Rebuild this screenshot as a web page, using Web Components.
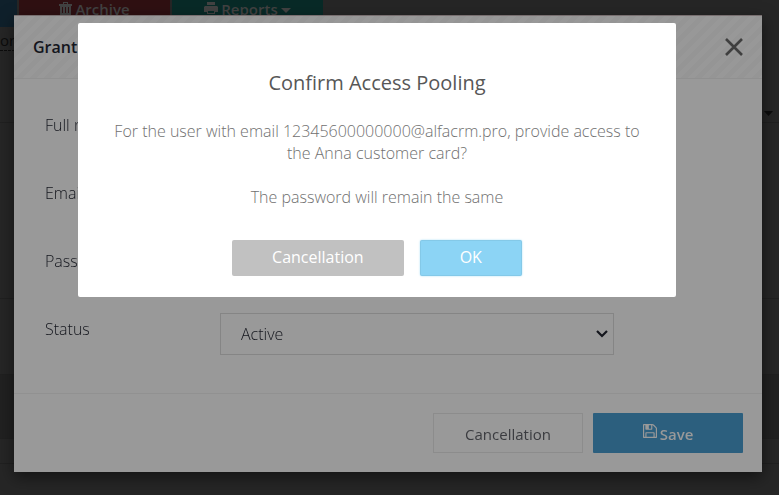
<!DOCTYPE html>
<html lang="en">
<head>
<meta charset="utf-8">
<title>Customer access</title>
<style>
html, body { height: 100%; }
body { margin: 0; background: #262626; font: 300 16px/22px "Open Sans", "Noto Sans", sans-serif; color: #14161d; }
</style>
</head>
<body>
<crm-page></crm-page>
<crm-modal heading="Grant access">
  <crm-field label="Full name" name="name"></crm-field>
  <crm-field label="Email" name="email"></crm-field>
  <crm-field label="Password" name="password"></crm-field>
  <crm-field label="Status" name="status" options="Active,Inactive"></crm-field>
  <crm-button slot="footer">Cancellation</crm-button>
  <crm-button slot="footer" kind="save">Save</crm-button>
</crm-modal>
<crm-confirm heading="Confirm Access Pooling">
  For the user with email 12345600000000@alfacrm.pro, provide access to the Anna customer card?<br><br>The password will remain the same
  <crm-button slot="actions" kind="cancel">Cancellation</crm-button>
  <crm-button slot="actions" kind="ok">OK</crm-button>
</crm-confirm>

<script>
function define(name, render) {
  customElements.define(name, class extends HTMLElement {
    constructor() {
      super();
      this.attachShadow({ mode: "open" });
    }
    connectedCallback() {
      this.shadowRoot.innerHTML = render(this);
    }
  });
}

define("crm-page", () => `
<style>
:host { display: block; background: #262626; color: #474747; }
.bar { display: flex; gap: 2px; background: #262626; height: 27px; }
button { border: 0; padding: 0; width: 151px; height: 27px; display: flex; align-items: flex-start; justify-content: center; gap: 3px; font: 600 15px/18px "Open Sans", sans-serif; color: #424242; }
.blue { width: 17px; background: #0f202b; }
.red { background: #2f1012; }
.teal { background: #082a27; }
svg { fill: currentColor; flex: none; }
.bar svg { margin-top: 2px; }
.bar .caret { margin-top: 8px; }
.tabs { height: 95px; box-sizing: border-box; padding: 3px 6px 6px 0; display: flex; justify-content: space-between; align-items: flex-start; }
.tabs a { line-height: 20px; color: #0c0c0c; text-decoration: none; border-bottom: 1px dashed #0c0c0c; font-size: 15px; font-weight: 400; }
.sort { align-self: flex-end; fill: #0c0c0c; }
.row { border-top: 1px solid #202020; }
.tall { height: 175px; }
.low { height: 75px; }
.shade { height: 63px; background: #212121; }
.last { height: 24px; }
.foot { height: 29px; }
</style>
<div class="bar">
  <button class="blue" aria-label="Add"></button>
  <button class="red"><svg width="13" height="13" viewBox="0 0 13 13"><path fill-rule="evenodd" d="M4 0h5v2h4v2h-1v9H1V4H0V2h4zM5 1v1h3V1zM3 5v6h1V5zm3 0v6h1V5zm3 0v6h1V5z"/></svg>Archive</button>
  <button class="teal"><svg width="14" height="12" viewBox="0 0 14 12"><path fill-rule="evenodd" d="M3 0h8v3H3zM1 4h12l1 1v5h-3v2H3v-2H0V5zM4 9v2h6V9z"/></svg>Reports<svg class="caret" width="10" height="5" viewBox="0 0 10 5"><path d="M0 0h10L5 5z"/></svg></button>
</div>
<div class="tabs"><a href="#">or</a><svg class="sort" width="9" height="5" viewBox="0 0 9 5"><path d="M0 0h9L4.500 5z"/></svg></div>
<div class="row tall"></div>
<div class="row low"></div>
<div class="row shade"></div>
<div class="row last"></div>
<div class="row foot"></div>`);

define("crm-modal", el => `
<style>
:host { position: fixed; inset: 0; display: block; padding: 15px 17px 23px 14px; }
section { background: #999; border-top: 1px solid #786f70; box-sizing: border-box; box-shadow: 0 5px 15px rgba(0,0,0,.5); }
header { display: flex; justify-content: space-between; align-items: center; box-sizing: border-box; height: 63px; padding: 0 19px; border-bottom: 1px solid #909090;
  background: repeating-linear-gradient(135deg, #989898 0 5px, #959595 5px 10px); }
h2 { margin: 0; font: 600 16px/24px "Open Sans", sans-serif; }
.close { border: 0; background: none; padding: 0; width: 18px; height: 18px; display: flex; }
form { padding: 30px 31px 38px; display: grid; gap: 26px; }
footer { border-top: 1px solid #919191; padding: 19px; display: flex; justify-content: flex-end; gap: 10px; }
</style>
<section role="dialog" aria-label="${el.getAttribute("heading")}">
  <header><h2>${el.getAttribute("heading")}</h2>
  <button class="close" aria-label="Close"><svg width="18" height="18" viewBox="0 0 18 18"><path d="M1 1l16 16m0-16l-16 16" stroke="#3f3f3f" stroke-width="2.600" fill="none"/></svg></button></header>
  <form><slot></slot></form>
  <footer><slot name="footer"></slot></footer>
</section>`);

define("crm-field", el => {
  const name = el.getAttribute("name");
  const options = el.getAttribute("options");
  const control = options
    ? `<select id="${name}">${options.split(",").map(o => `<option>${o}</option>`).join("")}</select><svg width="12" height="8" viewBox="0 0 12 8"><path d="M1 1l5 5 5-5" fill="none" stroke="#14161d" stroke-width="2.200"/></svg>`
    : `<input id="${name}" type="${name === "password" ? "password" : "text"}">`;
  return `
<style>
:host { display: grid; grid-template-columns: 175px minmax(0, 394px); }
label { padding-top: 5px; }
input, select, svg { grid-area: 1 / 2; }
input, select { width: 100%; height: 42px; box-sizing: border-box; margin: 0; border: 1px solid #858585; border-radius: 0; background: transparent; color: inherit; font: inherit; padding: 0 20px; appearance: none; }
svg { justify-self: end; align-self: center; margin-right: 6px; pointer-events: none; }
</style>
<label for="${name}">${el.getAttribute("label")}</label>${control}`;
});

define("crm-button", el => {
  const kind = el.getAttribute("kind");
  const icon = kind === "save" ? `<svg width="14" height="14" viewBox="0 128 1536 1536"><path d="M384 1536h768v-384H384zm896 0h128V640q0-14-10-38.500t-20-34.500l-281-281q-10-10-34-20t-39-10v416q0 40-28 68t-68 28H352q-40 0-68-28t-28-68V256H128v1280h128v-416q0-40 28-68t68-28h832q40 0 68 28t28 68zM896 608V288q0-13-9.500-22.500T864 256H672q-13 0-22.500 9.500T640 288v320q0 13 9.500 22.500T672 640h192q13 0 22.500-9.500T896 608zm640 32v928q0 40-28 68t-68 28H96q-40 0-68-28t-28-68V224q0-40 28-68t68-28h928q40 0 88 20t76 48l280 280q28 28 48 76t20 88z"/></svg>` : "";
  return `
<style>
:host { display: block; }
button { display: flex; align-items: center; justify-content: center; gap: 3px; box-sizing: border-box; min-width: 150px; height: 40px; margin: 0; padding: 2px 16px 0; border: 1px solid #8c8c8c; background: none; color: #3b3c40; font: 400 15px/22px "Open Sans", sans-serif; }
.save { background: #2c5f7e; border: 0; border-radius: 1px; color: #999; font-weight: 600; }
.cancel, .ok { min-width: 0; height: 36px; border: 0; border-radius: 2px; padding: 0 40px 2px; font: 400 16px/22px "Open Sans", sans-serif; color: #fff; background: #c1c1c1; }
.ok { background: #8cd4f5; box-shadow: 0 0 2px rgba(140,212,245,.8), inset 0 0 0 1px rgba(0,0,0,.05); }
svg { fill: currentColor; margin-bottom: 6px; }
</style>
<button type="button" class="${kind || ""}">${icon}<span><slot></slot></span></button>`;
});

define("crm-confirm", el => `
<style>
:host { position: fixed; inset: 0; display: flex; justify-content: center; align-items: flex-start; padding: 23px 25px 0 0; }
section { box-sizing: border-box; width: 100%; max-width: 598px; background: #fff; border-radius: 2px; padding: 45px 30px 21px; text-align: center; color: #707070; }
h2 { margin: 0 0 22px; font: 400 20px/30px "Open Sans", sans-serif; color: #575757; }
p { margin: 0; }
.actions { display: flex; justify-content: center; gap: 16px; margin-top: 32px; }
</style>
<section role="alertdialog" aria-label="${el.getAttribute("heading")}">
  <h2>${el.getAttribute("heading")}</h2>
  <p><slot></slot></p>
  <div class="actions"><slot name="actions"></slot></div>
</section>`);
</script>
</body>
</html>
